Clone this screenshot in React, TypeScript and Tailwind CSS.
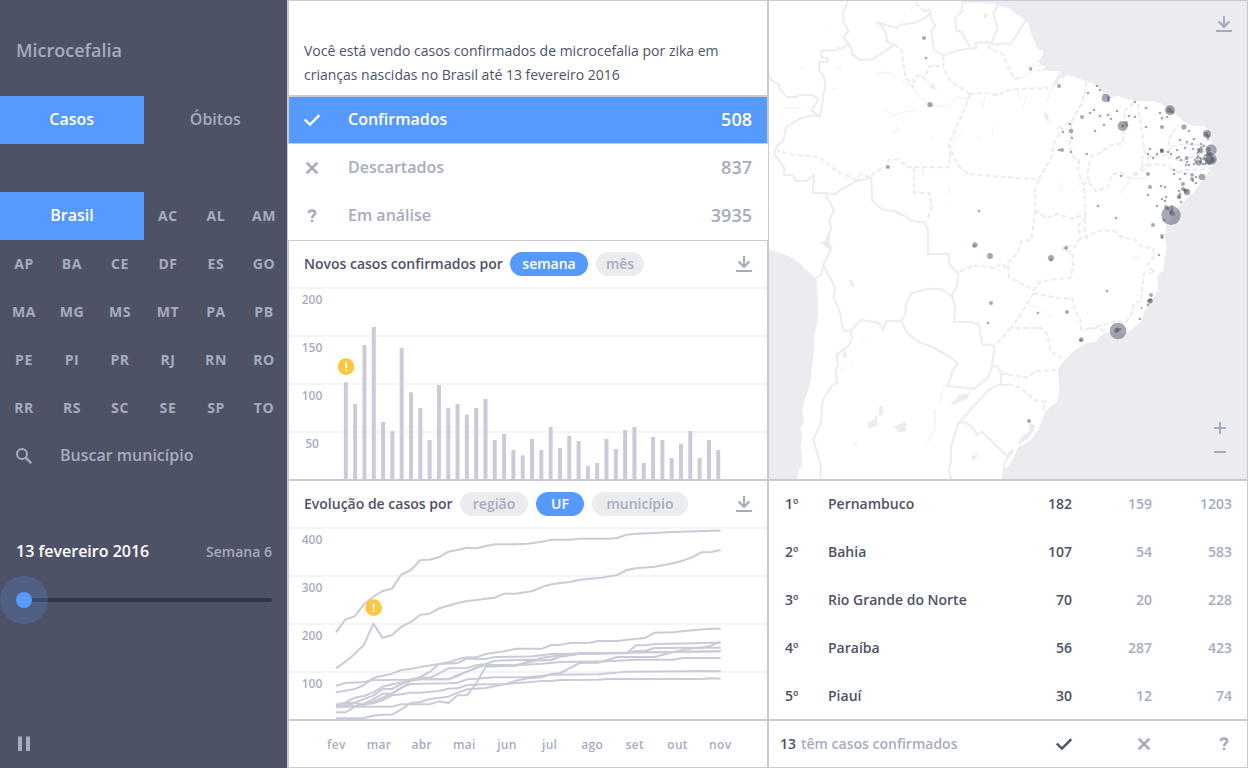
import React from "react";

const STATES = [
  "AP", "BA", "CE", "DF", "ES", "GO", "MA", "MG", "MS", "MT", "PA", "PB",
  "PE", "PI", "PR", "RJ", "RN", "RO", "RR", "RS", "SC", "SE", "SP", "TO",
];

const MONTHS = ["fev", "mar", "abr", "mai", "jun", "jul", "ago", "set", "out", "nov"];

const RANKING = [
  ["1º", "Pernambuco", "182", "159", "1203"],
  ["2º", "Bahia", "107", "54", "583"],
  ["3º", "Rio Grande do Norte", "70", "20", "228"],
  ["4º", "Paraíba", "56", "287", "423"],
  ["5º", "Piauí", "30", "12", "74"],
];

// Bar tops on a grid of a third of a pixel, measured from the panel's top edge.
const BAR_TOPS = [
  427, 492, 315, 261, 546, 573, 323, 457, 504, 600, 435, 504, 492, 524, 504, 477, 600, 582, 630, 646,
  597, 630, 561, 624, 588, 603, 678, 669, 597, 627, 570, 561, 669, 591, 600, 654, 612, 573, 654, 600, 630,
];

const LINES = [
  "144,457 172,418 200,409 228,373 256,350 284,333 312,326 340,284 369,270 397,240 425,239 453,232 481,215 509,210 537,203 565,205 593,198 621,193 680,193 720,191 762,185 790,179 846,179 875,176 960,176 988,174 1016,164 1044,161 1100,159 1155,156 1270,152 1298,152",
  "144,565 172,545 200,522 228,494 256,431 284,474 312,465 340,440 369,426 397,404 425,401 453,385 481,377 509,369 537,363 565,360 593,356 621,353 649,341 683,341 734,333 762,321 790,313 818,309 846,306 875,299 940,293 988,285 1016,270 1044,265 1100,260 1155,250 1184,242 1212,232 1240,217 1270,216 1298,210",
  "144,637 172,632 200,627 228,615 256,594 284,587 312,581 340,570 369,567 397,561 453,552 481,547 509,538 537,532 565,532 593,522 649,514 683,506 762,506 790,495 818,494 846,489 905,488 930,483 990,483 1016,479 1072,474 1100,458 1155,457 1212,451 1270,446 1298,446",
  "144,617 172,609 228,606 256,600 369,599 397,590 425,576 453,552 509,549 537,536 593,537 621,531 683,530 734,529 790,522 1016,520 1044,496 1072,496 1100,492 1298,488",
  "144,674 172,668 200,653 228,648 256,637 284,620 312,613 369,602 397,592 425,594 453,580 481,565 537,564 565,556 593,552 621,542 720,539 790,540 818,530 875,521 1016,518 1072,512 1100,504 1240,503 1298,503",
  "144,680 172,670 200,668 228,675 256,665 284,653 312,640 340,625 369,602 397,598 481,598 509,585 537,575 565,564 593,554 621,555 683,556 734,543 762,533 818,526 875,520 1016,518 1298,514",
  "144,697 172,697 200,681 228,670 256,658 284,641 312,641 340,622 369,612 481,610 509,608 537,598 565,596 621,592 720,592 790,584 930,583 1016,575 1184,574 1240,573 1298,574",
  "144,682 172,681 200,668 228,657 256,647 284,627 312,627 340,612 369,597 425,598 453,598 481,598 509,588 537,575 565,564 593,554 683,556 762,551 818,546 958,544 1044,539 1155,539 1184,534 1298,534",
  "144,682 172,680 312,680 340,673 425,673 453,664 481,669 509,646 537,646 565,610 593,560 683,557 720,547 740,542 790,540 818,528 875,521 1016,518 1044,513 1100,517 1298,514",
  "144,674 172,675 200,678 228,673 256,670 284,660 312,646 340,643 369,638 397,638 453,633 481,626 509,625 537,615 593,613 649,613 683,609 720,607 762,603 790,603 818,600 930,599 960,597 1240,597 1270,595 1298,596",
  "144,715 228,714 256,707 284,704 312,704 340,688 369,668 397,666 425,657 481,650 509,638 537,628 593,624 649,613 683,602 720,595 762,592 790,582 818,579 846,564 875,549 930,548 988,531 1100,531 1155,516 1212,505 1240,503 1270,497 1298,485",
];

// Map geometry, drawn on a 1440 x 1440 canvas.
const LAND =
  "M0,0 L585,0 585,8 640,8 690,14 705,22 722,22 740,38 758,50 768,60 782,70 788,100 800,128 806,142 812,150 824,150 826,162 820,174 808,186 834,200 824,208 832,212 877,214 876,232 884,238 895,225 922,232 950,243 972,248 985,258 1000,268 1005,285 1018,296 1030,294 1048,286 1070,296 1100,303 1155,303 1178,310 1192,322 1208,332 1222,342 1245,362 1268,377 1308,378 1318,388 1328,420 1336,450 1342,475 1338,492 1325,508 1316,524 1300,545 1280,572 1265,588 1250,604 1234,620 1216,648 1195,672 1192,700 1191,720 1197,745 1190,775 1186,810 1168,828 1170,870 1154,900 1145,912 1128,935 1122,962 1108,974 1098,982 1086,992 1070,1000 1040,998 1010,998 994,1012 982,1026 960,1028 945,1035 918,1052 895,1075 880,1092 870,1110 872,1150 874,1170 868,1200 865,1207 846,1222 830,1238 818,1270 808,1292 794,1314 780,1327 752,1340 740,1366 722,1394 720,1400 705,1410 700,1440 L88,1440 92,1410 100,1400 103,1370 98,1340 102,1310 97,1285 108,1266 103,1225 112,1196 121,1170 128,1140 133,1100 138,1060 138,1010 146,975 151,935 148,880 145,835 108,805 92,786 65,770 40,760 0,748 Z";

const SOLID = [
  "M238,0 L234,22 225,32 226,66 242,94 226,112 250,142 252,162 278,181 302,178 310,180 345,158 378,134 358,126 352,96 342,78 326,66 366,78 390,84 398,74 440,68 472,54 488,36 484,30 468,34 462,28",
  "M488,36 L490,58 502,76 490,94 494,124 498,150 526,166 574,150 626,143 622,128 660,126 680,134 706,130 728,133 750,98 772,64",
  "M584,0 L582,34 560,56 566,92 580,96 606,142",
  "M692,12 L676,40 688,84 672,128",
  "M250,142 L240,134 216,148 210,142 206,151 160,152 160,170 180,176 180,186 154,186 154,214 166,224 172,252 156,350 130,332 152,296 128,284 96,284 82,292 54,290 34,264 32,252 10,240 0,220",
  "M156,350 L134,346 92,358 54,382 46,422 28,436 18,460 50,506 46,524 74,526 82,543 114,543 138,524 134,578 170,579 198,630 184,660 190,686 176,714 190,744 166,796 202,864 196,890 214,930 226,992 248,992 280,960 332,968 344,990 354,963 400,964 412,940 414,910 432,878 484,866 520,867 556,892",
  "M170,579 L202,582 220,568 266,542 310,534 312,600 344,630 380,633 410,648 430,662 470,668 480,690 480,762 542,762 544,792 572,822 566,858 552,886 562,926 558,966 612,966 634,976 642,1034 670,1034 680,1040 670,1110 658,1136 618,1166 536,1158 550,1130 552,1112 570,1092 546,1070 486,1038 456,1028 420,1002 400,964",
  "M166,796 L160,824 144,834",
  "M248,992 L252,1012 242,1038 206,1064 210,1096 202,1112 208,1148 192,1156 164,1200 158,1274 136,1318 158,1398 158,1440",
  "M672,1100 L688,1096 700,1122 698,1152 664,1168 630,1204 570,1272 586,1266 608,1276 628,1304 640,1294 688,1340 720,1370 706,1396 710,1420",
  "M570,1272 L550,1336 548,1390 542,1410 552,1440",
  "M700,1122 L720,1122",
  "M698,1154 L720,1154",
];

const DASHED = [
  "M442,8 L462,28",
  "M378,134 L398,146 404,172 412,230 436,262 436,230 458,226 470,236 484,198 526,198",
  "M526,166 L526,206 548,244 606,282",
  "M606,282 L592,322 566,382 542,432 548,468 542,502 420,502 390,478 362,480 356,500 322,514 306,532 280,522 264,538 206,514 156,472 62,462 28,450",
  "M542,432 L570,496 600,522 720,532 812,538 850,474 858,428 884,386 870,384 910,366 944,304 956,246",
  "M438,502 L438,578 484,580 492,620 476,664",
  "M604,282 L650,278 690,286 720,270 770,266 840,264",
  "M660,134 L664,144 708,166 720,204 738,234 766,236",
  "M908,374 L912,396 904,440 918,472 934,482 930,512 948,560 950,600 952,648 950,690 958,720",
  "M812,538 L800,570 802,632 836,654 866,642 912,656 950,644",
  "M802,632 L790,720 760,722 748,760 720,788 722,830 796,870 816,846 860,838 906,834 916,800 912,756 884,750 886,736 920,742 932,720 1000,690 1040,694 1060,712 1100,718 1120,740 1156,746 1158,770 1138,796 1160,816 1128,820 1122,870 1120,904 1098,910 1092,940 1074,966 1040,964 1000,976 958,988",
  "M1098,310 L1070,330 1068,400 1064,430 1028,436 998,458 968,470 962,502 958,520 962,546 934,554",
  "M962,546 L984,574 1020,562 1032,524 1056,518 1084,534 1126,500 1146,488 1128,450 1124,410 1118,370 1110,312",
  "M1100,528 L1146,496 1180,492 1208,506 1240,520 1262,518 1300,532",
  "M1124,502 L1120,472 1196,464 1208,444 1200,420 1230,374",
  "M1210,440 L1250,432 1310,436",
  "M1198,470 L1240,484 1270,470 1336,486",
  "M1230,520 L1250,510 1300,508 1328,504",
  "M952,648 L930,680 940,718",
  "M796,880 L880,896 912,894 924,940 936,952 940,990 990,984 1010,994",
  "M796,880 L760,940 728,984 820,984 836,1000 848,1056 870,1066 890,1084",
  "M728,984 L682,1036",
  "M576,814 L616,796 682,804 700,790 720,808",
  "M720,1124 L780,1132 800,1114 864,1110",
  "M720,1152 L760,1164 800,1200 834,1206 824,1230",
];

const RIVERS = [
  "M322,222 L358,216 386,228 404,244 434,262 456,292 486,314 532,320 550,312",
  "M434,262 L452,226 480,244 500,268 508,268",
  "M350,330 L376,346 410,336 448,330",
  "M376,346 L366,356 M388,376 L382,396 M372,398 L384,394 M488,410 L492,420",
  "M458,486 L470,530 M544,560 L542,584 M526,624 L532,618",
  "M548,302 L572,290 606,298 M644,324 L652,286 M552,430 L584,394",
  "M632,406 L632,416 M674,384 L674,402 M686,364 L684,358",
  "M46,326 L92,322 98,332 M38,347 L46,346 M170,85 L180,86 M406,38 L414,48",
  "M200,206 L222,202 M98,203 L106,204 M186,269 L206,266 M14,602 L20,608",
  "M526,1160 L516,1210 M502,1230 L500,1290 482,1322 468,1334",
  "M220,1120 L232,1096 M250,1040 L258,1040 M282,1026 L292,1020 M248,1088 L260,1089",
  "M784,916 L812,922 850,952 M1092,774 L1116,766 M975,836 L978,838 M958,936 L958,942",
  "M748,262 L756,302 M776,290 L762,330 M850,260 L838,302 M878,545 L878,570",
  "M1056,580 L1090,536 1140,534",
  "M776,200 L836,194 M784,208 L808,182 M800,214 L838,206 M740,240 L796,214",
];

const LAKES = [
  "M488,256 L498,250 502,268 486,264 Z",
  "M646,42 L660,40 654,56 648,52 Z",
  "M156,728 L172,724 180,700 188,712 180,730 196,744 182,748 Z",
  "M242,840 L252,840 260,858 252,860 Z",
  "M220,1066 L234,1050 236,1076 Z",
  "M334,1220 L344,1218 348,1234 338,1250 332,1244 Z",
  "M300,1266 L320,1256 324,1240 330,1274 302,1286 Z",
  "M376,1280 L414,1264 415,1294 394,1296 Z",
  "M544,1218 L576,1184 600,1180 608,1170 598,1196 Z",
  "M258,1326 L266,1330 266,1344 Z",
  "M784,1270 L802,1276 798,1292 778,1316 750,1336 756,1316 782,1294 Z",
  "M718,1360 L732,1346 738,1354 724,1374 Z",
  "M704,1418 L720,1400 720,1440 700,1440 Z",
  "M542,1428 L554,1440 544,1440 Z",
  "M832,330 L842,350 842,368 828,352 Z",
  "M872,222 L878,222 872,250 850,262 Z",
  "M610,1370 L628,1362 626,1372 614,1384 Z",
];

// x, y, radius
const CASES: number[][] = [
  [468, 114, 6], [474, 174, 4], [486, 314, 8], [360, 501, 6], [633, 633, 4],
  [788, 207, 5], [873, 258, 6], [987, 258, 4], [996, 270, 4], [960, 279, 4],
  [1013, 294, 12], [1022, 294, 5], [1022, 302, 4], [1101, 306, 4], [1134, 324, 4],
  [978, 330, 4], [966, 339, 4], [942, 351, 6], [996, 348, 4], [1020, 345, 4],
  [1047, 333, 4], [1029, 357, 4], [1083, 348, 4], [1101, 351, 4], [1064, 378, 15],
  [1064, 378, 5], [1075, 368, 5], [1077, 376, 4], [1008, 375, 4], [906, 372, 4],
  [885, 396, 4], [909, 393, 7], [981, 393, 4], [912, 414, 4], [873, 450, 4],
  [882, 450, 6], [909, 456, 4], [956, 462, 4], [1134, 381, 4], [1182, 381, 6],
  [1206, 331, 15], [1204, 330, 8], [1213, 336, 5], [1176, 339, 4], [1182, 354, 4], [1197, 351, 4],
  [1248, 381, 8], [1263, 393, 4], [1317, 402, 12], [1314, 402, 7], [1320, 408, 6], [1320, 417, 4],
  [1278, 417, 4], [1236, 420, 4], [1257, 426, 4], [1272, 432, 4], [1299, 432, 4],
  [1308, 438, 4], [1300, 442, 4], [1298, 452, 8], [1292, 450, 6], [1329, 450, 17],
  [1322, 448, 7], [1322, 460, 6], [1328, 462, 5], [1329, 478, 17], [1326, 478, 12], [1334, 480, 8],
  [1318, 464, 5], [1312, 466, 4], [1289, 459, 4], [1146, 447, 4], [1140, 462, 4],
  [1155, 474, 4], [1167, 462, 4], [1181, 453, 5], [1181, 450, 5], [1182, 453, 7], [1200, 456, 4], [1209, 462, 4],
  [1227, 450, 4], [1251, 444, 4], [1275, 447, 4], [1227, 474, 4], [1233, 471, 4],
  [1239, 480, 4], [1256, 474, 6], [1257, 486, 4], [1254, 495, 4], [1263, 495, 4],
  [1281, 480, 4], [1278, 492, 4], [1290, 468, 4], [1292, 488, 9], [1298, 486, 5],
  [1305, 492, 4], [1308, 474, 5], [1312, 478, 5], [1296, 474, 4], [1287, 474, 4],
  [1284, 486, 4], [1312, 492, 4], [1324, 490, 5], [1316, 486, 6], [1300, 478, 4],
  [1218, 510, 4], [1218, 522, 4], [1251, 522, 4], [1140, 522, 6], [1059, 528, 4],
  [1272, 525, 5], [1272, 537, 6], [1275, 542, 4], [1284, 531, 4], [1284, 549, 4],
  [1302, 531, 10], [1236, 537, 4], [1245, 552, 6], [1146, 561, 6], [1179, 558, 4],
  [1191, 561, 4], [1245, 567, 6], [1250, 570, 5], [1257, 576, 10], [1254, 574, 6],
  [1233, 573, 4], [1236, 582, 4], [1233, 591, 7], [1234, 590, 4], [1140, 585, 4],
  [1182, 597, 4], [1194, 591, 4], [1191, 603, 4], [1239, 606, 4], [1167, 618, 4],
  [990, 618, 4], [1044, 654, 4], [1209, 646, 29], [1194, 621, 6], [1200, 626, 5],
  [1212, 619, 4], [1212, 628, 4], [1213, 640, 8], [1209, 636, 6], [1188, 660, 4],
  [1155, 675, 6], [1182, 708, 6], [1182, 714, 4],
  [621, 735, 8], [618, 738, 4], [666, 768, 9], [669, 909, 6], [660, 969, 4],
  [894, 744, 6], [849, 774, 9], [849, 780, 4], [1173, 765, 4], [1017, 873, 4],
  [1149, 885, 6], [1146, 903, 8], [1143, 903, 5], [1149, 900, 5], [1140, 915, 4],
  [1121, 924, 3], [1116, 957, 4], [897, 936, 6], [810, 939, 4],
  [1050, 993, 25], [1046, 991, 8], [1048, 990, 5], [1056, 987, 4],
  [940, 1019, 7], [938, 1021, 4], [783, 1263, 6],
];

const DownloadIcon = () => (
  <svg width="16" height="16" viewBox="0 0 16 16" fill="none" stroke="#a6acbe" strokeWidth="2">
    <path d="M8 0V11M0 15H16" />
    <path d="M2.7 5.5L8 10.8L13.3 5.5" strokeWidth="2.4" />
  </svg>
);

const CheckIcon = () => (
  <svg width="16" height="16" viewBox="0 0 16 16" fill="none" stroke="currentColor" strokeWidth="2.4">
    <path d="M0.8 7.5L6 12.5L15.3 3.2" />
  </svg>
);

const CrossIcon = () => (
  <svg width="16" height="16" viewBox="0 0 16 16" fill="none" stroke="currentColor" strokeWidth="2.6">
    <path d="M2.6 2.6L13.4 13.4M13.4 2.6L2.6 13.4" />
  </svg>
);

const QuestionIcon = () => (
  <svg width="16" height="16" viewBox="0 0 16 16" fill="none" stroke="currentColor" strokeWidth="2.5">
    <path d="M4.9 5.2C4.9 3.2 6.1 2.4 8.1 2.4C10 2.4 11.1 3.3 11.1 4.9C11.1 7.2 8.1 7.4 8.1 10.3M8.1 11.8V14.3" />
  </svg>
);

const Alert = ({ cx, cy }: { cx: number; cy: number }) => (
  <g>
    <circle cx={cx} cy={cy} r="25" fill="#ffc53d" />
    <path d={`M${cx},${cy - 13}V${cy + 4}M${cx},${cy + 8}V${cy + 13}`} stroke="#fff" strokeWidth="6" />
  </g>
);

const GridLines = () => (
  <g stroke="#f4f4f7" strokeWidth="6">
    <path d="M0,144H1440M0,288H1440M0,432H1440M0,576H1440" />
  </g>
);

const AxisLabels = ({ labels }: { labels: string[] }) => (
  <g fill="#a6acbe" fontSize="36" fontWeight="600" textAnchor="middle">
    {labels.map((label, i) => (
      <text key={label} x="72" y={192 + i * 144}>{label}</text>
    ))}
  </g>
);

const Pill = ({ label, width, active }: { label: string; width: string; active?: boolean }) => (
  <button
    className={`flex h-6 items-center justify-center rounded-full text-[14px] leading-6 font-semibold ${width} ${
      active ? "bg-[#569aff] text-white" : "bg-[#ebecf0] text-[#a6acbe]"
    }`}
  >
    {label}
  </button>
);

function Sidebar() {
  return (
    <aside className="flex w-[288px] shrink-0 flex-col border-r border-[#c9cad8] bg-[#4e5266] font-semibold text-[#a6acbe]">
      <h1 className="h-24 pt-[38px] pl-4 text-[18px] leading-6">Microcefalia</h1>
      <nav className="flex h-12 text-[16px] leading-[46px]">
        <button className="w-36 bg-[#569aff] pb-0.5 text-white">Casos</button>
        <button className="w-36 pb-0.5">Óbitos</button>
      </nav>
      <div className="mt-12 grid w-[288px] grid-cols-[repeat(6,48px)] text-center text-[14px] leading-[48px] font-bold tracking-[0.6px]">
        <button className="col-span-3 bg-[#569aff] pb-0.5 text-[16px] leading-[46px] font-semibold tracking-normal text-white">Brasil</button>
        {["AC", "AL", "AM", ...STATES].map((s) => (
          <button key={s} className="h-12">{s}</button>
        ))}
      </div>
      <div className="flex h-12 items-center pl-4">
        <svg width="16" height="16" viewBox="0 0 16 16" fill="none" stroke="#a6acbe">
          <circle cx="6" cy="6" r="5" strokeWidth="2" />
          <path d="M9.6 9.6L15.2 15.2" strokeWidth="2.6" />
        </svg>
        <span className="ml-7 pb-0.5 text-[16px] leading-[46px]">Buscar município</span>
      </div>
      <div className="mt-12 flex h-12 items-center justify-between pr-[15px] pb-0.5 pl-4">
        <span className="text-[16px] leading-[46px] text-white">13 fevereiro 2016</span>
        <span className="pt-0.5 text-[14px] leading-[44px]">Semana 6</span>
      </div>
      <svg className="h-12 w-[288px]" viewBox="0 0 288 48">
        <path d="M24 24H270" stroke="#363746" strokeWidth="4" strokeLinecap="round" />
        <circle cx="24" cy="24" r="24" fill="#569aff" opacity="0.2" />
        <circle cx="24" cy="24" r="8" fill="#569aff" />
      </svg>
      <svg className="mt-auto mb-4 ml-4" width="16" height="16" viewBox="0 0 16 16" fill="#a6acbe">
        <path d="M2 0.6H6V15H2ZM10 0.6H14V15H10Z" />
      </svg>
    </aside>
  );
}

function StatusRow({ icon, label, value, active }: { icon: React.ReactNode; label: string; value: string; active?: boolean }) {
  return (
    <div
      className={`flex h-12 items-center border px-[15px] font-semibold ${
        active ? "border-[#c9cad8] bg-[#569aff] text-white" : "border-transparent text-[#a6acbe]"
      }`}
    >
      {icon}
      <span className="ml-7 pb-0.5 text-[16px] leading-[44px]">{label}</span>
      <span className="ml-auto pb-0.5 text-[18px] leading-[44px]">{value}</span>
    </div>
  );
}

function WeeklyChart() {
  return (
    <section className="grid h-60 border border-[#c9cad8]">
      <svg className="col-start-1 row-start-1 -m-px h-60 w-[480px]" viewBox="0 0 1440 720">
        <GridLines />
        <AxisLabels labels={["200", "150", "100", "50"]} />
        <g fill="#cacbd8">
          {BAR_TOPS.map((top, i) => (
            <rect key={i} x={167.5 + i * 27.93} y={top} width="12" height={717 - top} />
          ))}
        </g>
        <Alert cx={174} cy={380} />
        <path d="M0,1.5H1440M0,718.5H1440M1.5,0V720M1438.5,0V720" stroke="#c9cad8" strokeWidth="3" />
      </svg>
      <header className="col-start-1 row-start-1 flex h-[46px] items-center px-[15px] text-[14px] leading-6 font-semibold text-[#4e5266]">
        <h2 className="w-[206px] whitespace-nowrap">Novos casos confirmados por</h2>
        <Pill label="semana" width="w-[78px]" active />
        <span className="w-2" />
        <Pill label="mês" width="w-12" />
        <span className="ml-auto"><DownloadIcon /></span>
      </header>
    </section>
  );
}

function EvolutionChart() {
  return (
    <section className="grid h-60 border border-[#c9cad8]">
      <svg className="col-start-1 row-start-1 -m-px h-60 w-[480px]" viewBox="0 0 1440 720">
        <GridLines />
        <AxisLabels labels={["400", "300", "200", "100"]} />
        <g fill="none" stroke="#cacbd8" strokeWidth="6" strokeLinejoin="round">
          {LINES.map((points) => (
            <polyline key={points} points={points} />
          ))}
        </g>
        <Alert cx={257} cy={383} />
        <path d="M0,1.5H1440M0,718.5H1440M1.5,0V720M1438.5,0V720" stroke="#c9cad8" strokeWidth="3" />
      </svg>
      <header className="col-start-1 row-start-1 flex h-[46px] items-center px-[15px] text-[14px] leading-6 font-semibold text-[#4e5266]">
        <h2 className="w-[156px] whitespace-nowrap">Evolução de casos por</h2>
        <Pill label="região" width="w-[68px]" />
        <span className="w-2" />
        <Pill label="UF" width="w-12" active />
        <span className="w-2" />
        <Pill label="município" width="w-24" />
        <span className="ml-auto"><DownloadIcon /></span>
      </header>
    </section>
  );
}

function CasesMap() {
  return (
    <section className="relative h-[480px] border border-[#c9cad8]">
      <svg className="-m-px h-[480px] w-[480px]" viewBox="0 0 1440 1440" fill="none">
        <rect width="1440" height="1440" fill="#ebecf0" />
        <path d={LAND} fill="#fff" />
        <g stroke="#ebecf0" strokeWidth="6" strokeLinejoin="round">
          {SOLID.map((d) => <path key={d} d={d} />)}
        </g>
        <g stroke="#ebecf0" strokeWidth="6" strokeDasharray="16 7">
          {DASHED.map((d) => <path key={d} d={d} />)}
        </g>
        <g stroke="#ebecf0" strokeWidth="2.5">
          {RIVERS.map((d) => <path key={d} d={d} />)}
        </g>
        <g fill="#ebecf0">
          {LAKES.map((d) => <path key={d} d={d} />)}
        </g>
        <g fill="#4e5266" fillOpacity="0.5">
          {CASES.map(([x, y, r], i) => <circle key={i} cx={x} cy={y} r={r} />)}
        </g>
        <path d="M0,1.5H1440M0,1438.5H1440M1.5,0V1440M1438.5,0V1440" stroke="#c9cad8" strokeWidth="3" />
      </svg>
      <button className="absolute top-[15px] right-[15px]"><DownloadIcon /></button>
      <svg className="absolute right-[21px] bottom-[21px]" width="12" height="36" viewBox="0 0 12 36" stroke="#a6acbe" strokeWidth="2">
        <path d="M0 6H12M6 0V12M0 30H12" />
      </svg>
    </section>
  );
}

function Ranking() {
  return (
    <>
      <section className="h-60 border border-[#c9cad8] text-[14px] leading-[46px] font-semibold text-[#a6acbe]">
        <div className="-my-px">
          {RANKING.map(([pos, name, a, b, c]) => (
            <div key={pos} className="flex h-12 items-center pr-[15px] pl-4">
              <span className="w-[43px] text-[#4e5266]">{pos}</span>
              <span className="w-[164px] whitespace-nowrap text-[#4e5266]">{name}</span>
              <span className="w-20 text-right text-[#4e5266]">{a}</span>
              <span className="w-20 text-right">{b}</span>
              <span className="w-20 text-right">{c}</span>
            </div>
          ))}
        </div>
      </section>
      <footer className="flex h-12 items-center border border-[#c9cad8] pr-[15px] pl-[11px] text-[14px] leading-6 font-semibold text-[#a6acbe]">
        <span className="text-[#4e5266]">13</span>
        <span className="ml-[5px]">têm casos confirmados</span>
        <span className="ml-auto flex gap-16">
          <span className="text-[#4e5266]"><CheckIcon /></span>
          <CrossIcon />
          <QuestionIcon />
        </span>
      </footer>
    </>
  );
}

export default function App() {
  return (
    <div className="flex h-[768px] w-[1248px] overflow-hidden bg-white font-['Open_Sans','Noto_Sans',sans-serif]">
      <Sidebar />
      <main className="flex w-[480px] shrink-0 flex-col">
        <p className="h-24 border border-[#c9cad8] px-[15px] pt-[38px] text-[14px] leading-6 text-[#4e5266]">
          Você está vendo casos confirmados de microcefalia por zika em crianças nascidas no Brasil até 13 fevereiro 2016
        </p>
        <StatusRow icon={<CheckIcon />} label="Confirmados" value="508" active />
        <StatusRow icon={<CrossIcon />} label="Descartados" value="837" />
        <StatusRow icon={<QuestionIcon />} label="Em análise" value="3935" />
        <WeeklyChart />
        <EvolutionChart />
        <div className="flex h-12 items-center border border-[#c9cad8] pt-0.5 pl-[26px] text-[12px] leading-6 font-semibold text-[#a6acbe]">
          {MONTHS.map((m) => (
            <span key={m} className="w-[42.67px] shrink-0 text-center tracking-[0.3px]">{m}</span>
          ))}
        </div>
      </main>
      <div className="w-[480px] shrink-0">
        <CasesMap />
        <Ranking />
      </div>
    </div>
  );
}
